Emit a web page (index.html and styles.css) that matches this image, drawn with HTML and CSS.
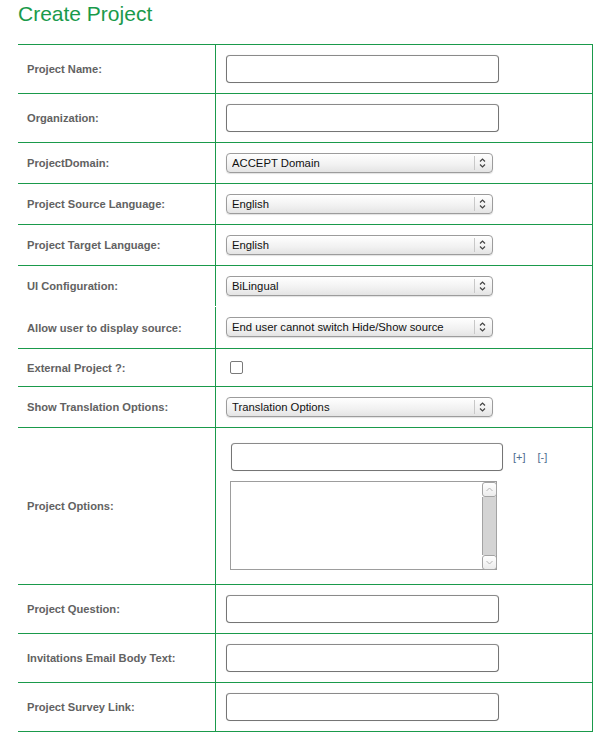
FILE: index.html
```html
<!DOCTYPE html>
<html>
<head>
<meta charset="utf-8">
<title>Create Project</title>
<link rel="stylesheet" href="styles.css">
</head>
<body>
<h1 class="title">Create Project</h1>
<div class="form">
  <div class="row row-text">
    <div class="label">Project Name:</div>
    <div class="field"><input class="text" type="text"></div>
  </div>
  <div class="row row-text">
    <div class="label">Organization:</div>
    <div class="field"><input class="text" type="text"></div>
  </div>
  <div class="row row-select">
    <div class="label">ProjectDomain:</div>
    <div class="field"><span class="select-wrap"><select class="select"><option>ACCEPT Domain</option></select><svg class="arrows" viewBox="0 0 19 20" width="19" height="20"><line x1="0.5" y1="3" x2="0.5" y2="17" stroke="#c8c8c8"/><polyline points="6,8.5 8.5,6 11,8.5" fill="none" stroke="#444" stroke-width="1.2"/><polyline points="6,11.5 8.5,14 11,11.5" fill="none" stroke="#444" stroke-width="1.2"/></svg></span></div>
  </div>
  <div class="row row-select">
    <div class="label">Project Source Language:</div>
    <div class="field"><span class="select-wrap"><select class="select"><option>English</option></select><svg class="arrows" viewBox="0 0 19 20" width="19" height="20"><line x1="0.5" y1="3" x2="0.5" y2="17" stroke="#c8c8c8"/><polyline points="6,8.5 8.5,6 11,8.5" fill="none" stroke="#444" stroke-width="1.2"/><polyline points="6,11.5 8.5,14 11,11.5" fill="none" stroke="#444" stroke-width="1.2"/></svg></span></div>
  </div>
  <div class="row row-select">
    <div class="label">Project Target Language:</div>
    <div class="field"><span class="select-wrap"><select class="select"><option>English</option></select><svg class="arrows" viewBox="0 0 19 20" width="19" height="20"><line x1="0.5" y1="3" x2="0.5" y2="17" stroke="#c8c8c8"/><polyline points="6,8.5 8.5,6 11,8.5" fill="none" stroke="#444" stroke-width="1.2"/><polyline points="6,11.5 8.5,14 11,11.5" fill="none" stroke="#444" stroke-width="1.2"/></svg></span></div>
  </div>
  <div class="row row-select row-open">
    <div class="label">UI Configuration:</div>
    <div class="field"><span class="select-wrap"><select class="select"><option>BiLingual</option></select><svg class="arrows" viewBox="0 0 19 20" width="19" height="20"><line x1="0.5" y1="3" x2="0.5" y2="17" stroke="#c8c8c8"/><polyline points="6,8.5 8.5,6 11,8.5" fill="none" stroke="#444" stroke-width="1.2"/><polyline points="6,11.5 8.5,14 11,11.5" fill="none" stroke="#444" stroke-width="1.2"/></svg></span></div>
  </div>
  <div class="row row-select row-tall">
    <div class="label">Allow user to display source:</div>
    <div class="field"><span class="select-wrap"><select class="select"><option>End user cannot switch Hide/Show source</option></select><svg class="arrows" viewBox="0 0 19 20" width="19" height="20"><line x1="0.5" y1="3" x2="0.5" y2="17" stroke="#c8c8c8"/><polyline points="6,8.5 8.5,6 11,8.5" fill="none" stroke="#444" stroke-width="1.2"/><polyline points="6,11.5 8.5,14 11,11.5" fill="none" stroke="#444" stroke-width="1.2"/></svg></span></div>
  </div>
  <div class="row row-check">
    <div class="label">External Project ?:</div>
    <div class="field"><input class="check" type="checkbox"></div>
  </div>
  <div class="row row-select">
    <div class="label">Show Translation Options:</div>
    <div class="field"><span class="select-wrap"><select class="select"><option>Translation Options</option></select><svg class="arrows" viewBox="0 0 19 20" width="19" height="20"><line x1="0.5" y1="3" x2="0.5" y2="17" stroke="#c8c8c8"/><polyline points="6,8.5 8.5,6 11,8.5" fill="none" stroke="#444" stroke-width="1.2"/><polyline points="6,11.5 8.5,14 11,11.5" fill="none" stroke="#444" stroke-width="1.2"/></svg></span></div>
  </div>
  <div class="row row-options">
    <div class="label">Project Options:</div>
    <div class="field options">
      <div class="opt-line">
        <input class="text opt-input" type="text">
        <a class="opt-link" href="#">[+]</a>
        <a class="opt-link" href="#">[-]</a>
      </div>
      <div class="area-wrap">
        <textarea class="area"></textarea>
        <div class="scrollbar">
          <div class="sb-btn"><svg viewBox="0 0 13 13" width="13" height="13"><polyline points="3.5,8 6.5,5 9.5,8" fill="none" stroke="#b5b5b5"/></svg></div>
          <div class="sb-track"></div>
          <div class="sb-btn"><svg viewBox="0 0 13 13" width="13" height="13"><polyline points="3.5,5 6.5,8 9.5,5" fill="none" stroke="#b5b5b5"/></svg></div>
        </div>
      </div>
    </div>
  </div>
  <div class="row row-text">
    <div class="label">Project Question:</div>
    <div class="field"><input class="text" type="text"></div>
  </div>
  <div class="row row-text">
    <div class="label">Invitations Email Body Text:</div>
    <div class="field"><input class="text" type="text"></div>
  </div>
  <div class="row row-text">
    <div class="label">Project Survey Link:</div>
    <div class="field"><input class="text" type="text"></div>
  </div>
</div>
</body>
</html>
```
FILE: styles.css
```css
* { box-sizing: border-box; }

html, body {
  margin: 0;
  padding: 0;
  background: #ffffff;
  font-family: "Liberation Sans", Arial, sans-serif;
}

body {
  padding: 2px 0 0 18px;
}

.title {
  margin: 0 0 18px 0;
  font-size: 21px;
  line-height: 24px;
  font-weight: normal;
  color: #1a9a4b;
}

.form {
  width: 575px;
  border-top: 1px solid #1a9a4b;
  border-right: 1px solid #1a9a4b;
}

.row {
  display: grid;
  grid-template-columns: 198px 1fr;
  border-bottom: 1px solid #1a9a4b;
}

.row-open {
  border-bottom-color: transparent;
}

.label {
  display: flex;
  align-items: center;
  padding-left: 9px;
  border-right: 1px solid #1a9a4b;
  font-size: 11.15px;
  font-weight: bold;
  color: #626262;
}

.field {
  display: flex;
  align-items: center;
  padding: 10px 10px;
}

.row-tall .field {
  padding-bottom: 11px;
}

.row-check .field {
  padding: 12px 10px;
}

.text {
  display: block;
  width: 273px;
  height: 28px;
  margin: 0;
  border: 1px solid #757575;
  border-top-color: #8a8a8a;
  border-radius: 4px;
  box-shadow: 0 0 1px 0 #cfcfcf;
  background: #fff;
  font-family: "Liberation Sans", Arial, sans-serif;
  font-size: 11px;
}

.select-wrap {
  position: relative;
  display: block;
  width: 267px;
  height: 20px;
}

.select {
  -webkit-appearance: none;
  appearance: none;
  display: block;
  width: 267px;
  height: 20px;
  margin: 0;
  padding: 0 22px 0 5px;
  border: 1px solid #9c9c9c;
  border-radius: 4px;
  background: linear-gradient(#ffffff, #f1f1f1 60%, #e4e4e4);
  box-shadow: 0 1px 1px rgba(0, 0, 0, 0.12);
  color: #111;
  font-family: "Liberation Sans", Arial, sans-serif;
  font-size: 11.3px;
  line-height: 18px;
}

.arrows {
  position: absolute;
  right: 0;
  top: 0;
  pointer-events: none;
}

.check {
  -webkit-appearance: none;
  appearance: none;
  display: block;
  width: 13px;
  height: 13px;
  margin: 0 0 0 4px;
  border: 1px solid #7a7a7a;
  border-radius: 2px;
  background: #fff;
}

.options {
  flex-direction: column;
  align-items: flex-start;
  padding: 15px 10px 14px 14px;
  gap: 10px;
}

.opt-line {
  display: flex;
  align-items: center;
}

.opt-input {
  width: 272px;
  margin-left: 1px;
}

.opt-link {
  margin-left: 10px;
  font-size: 11px;
  color: #4d6c8f;
  text-decoration: none;
}

.opt-link + .opt-link {
  margin-left: 12px;
}

.area-wrap {
  position: relative;
  width: 267px;
  height: 89px;
}

.area {
  display: block;
  width: 267px;
  height: 89px;
  margin: 0;
  border: 1px solid #9d9d9d;
  border-radius: 0;
  resize: none;
  overflow: hidden;
  background: #fff;
}

.scrollbar {
  position: absolute;
  top: 1px;
  right: 0;
  bottom: 0;
  width: 15px;
  display: flex;
  flex-direction: column;
}

.sb-btn {
  height: 15px;
  border: 1px solid #a3a3a3;
  border-radius: 3px;
  background: linear-gradient(#ffffff, #ececec);
  display: flex;
  align-items: center;
  justify-content: center;
}

.sb-track {
  flex: 1;
  background: #d4d4d4;
  border-left: 1px solid #a3a3a3;
  border-right: 1px solid #a3a3a3;
}
```
